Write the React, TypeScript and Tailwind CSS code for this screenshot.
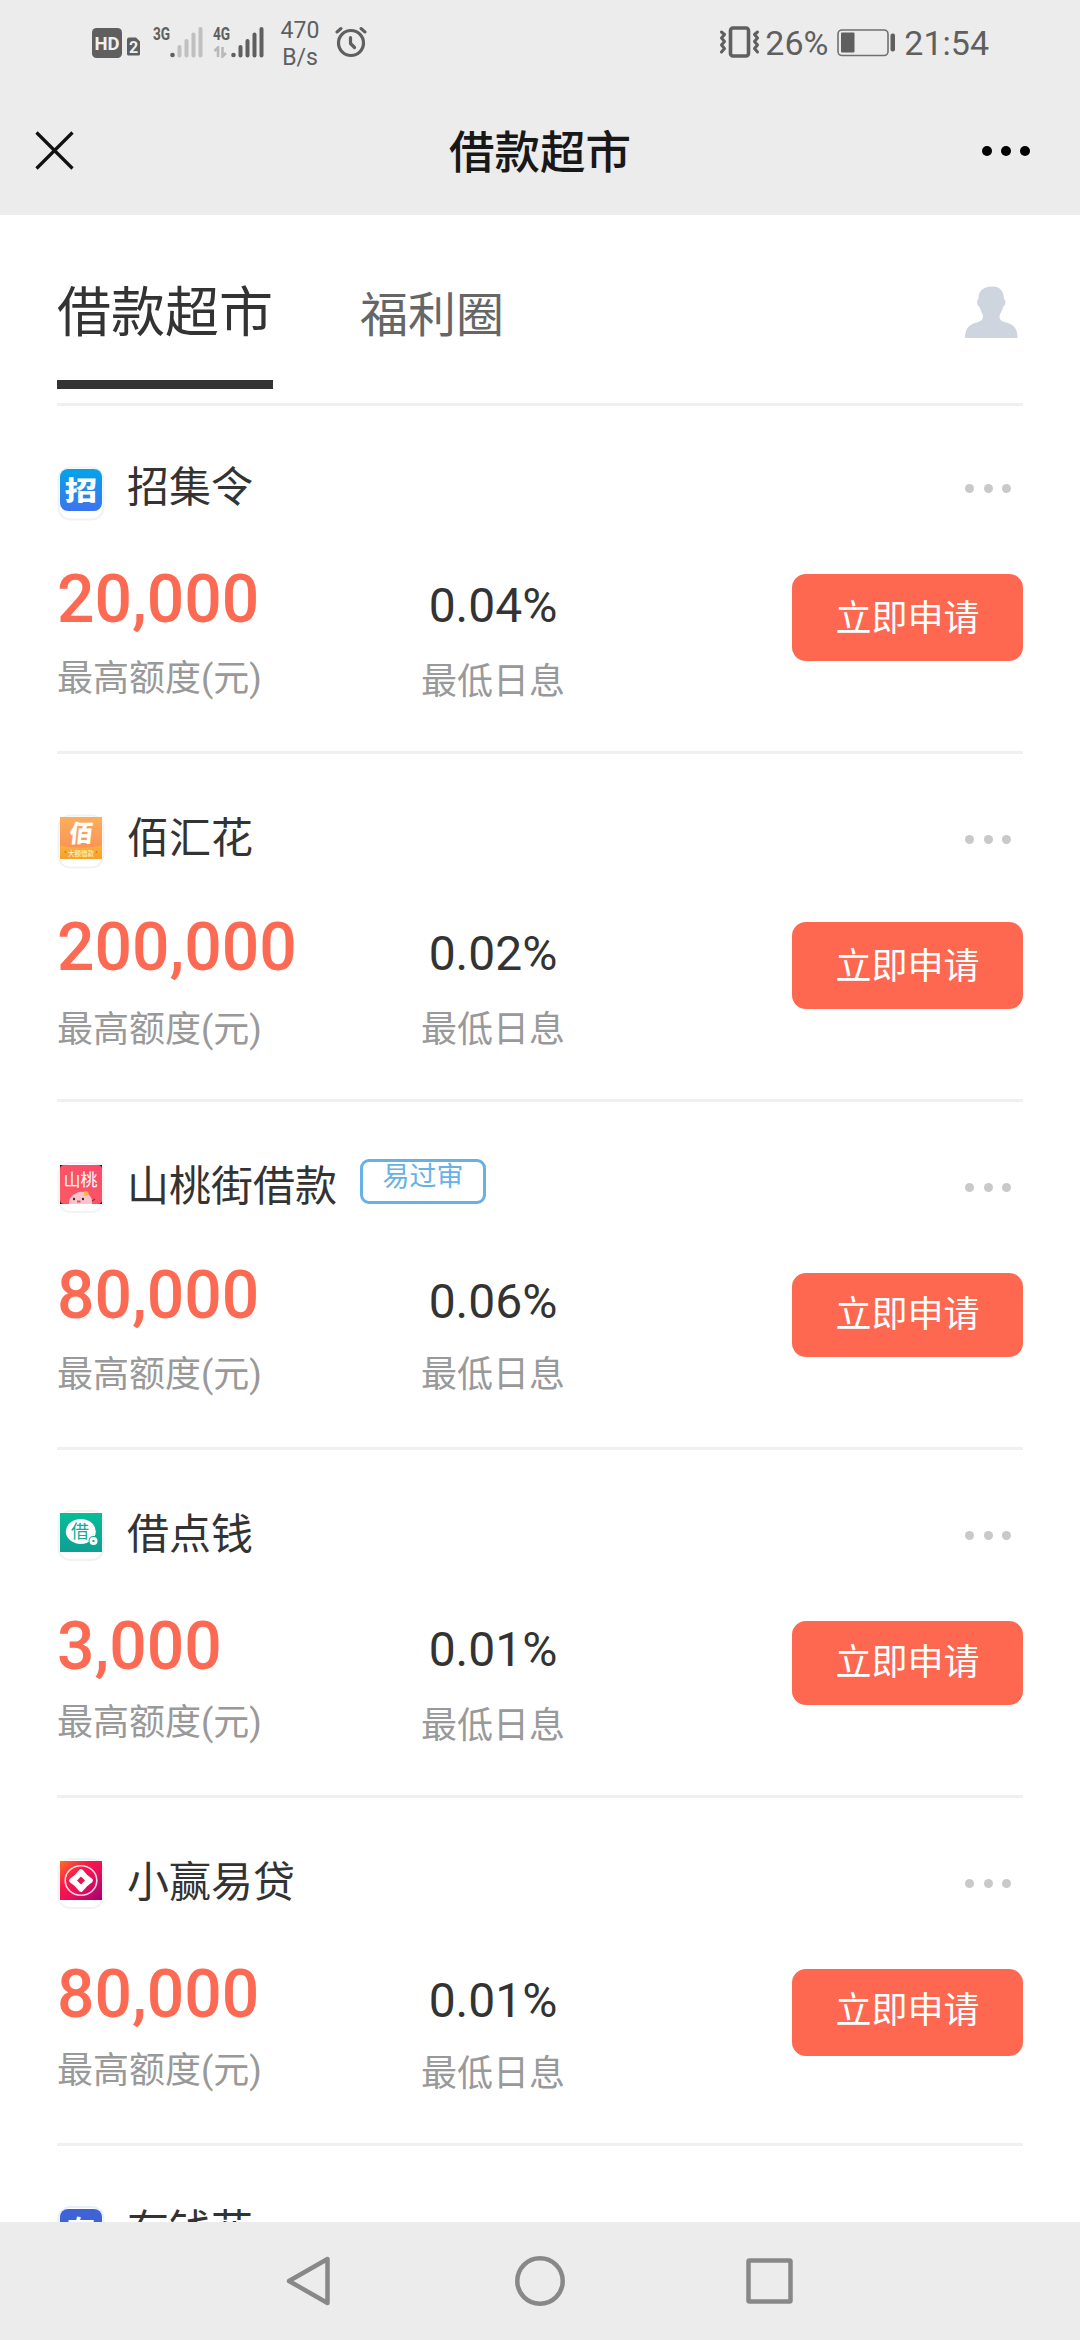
import clsx from "clsx";
import type { ReactNode } from "react";

type Loan = {
  name: string;
  logo: ReactNode;
  amount?: string;
  rate?: string;
  tag?: string;
  nameTop?: string;
  dotsTop?: string;
  amountTop?: string;
  rateTop?: string;
  limitTop?: string;
  interestTop?: string;
  button?: string;
};

const logoText = "'Noto Sans CJK SC', sans-serif";

function ZhaoLogo() {
  return (
    <svg width="48" height="56" viewBox="0 0 48 56" className="block">
      <defs>
        <linearGradient id="zhao" x1="0" y1="0" x2="0" y2="1">
          <stop offset="0" stopColor="#05a3ea" />
          <stop offset="1" stopColor="#3c74ee" />
        </linearGradient>
      </defs>
      <rect x="1.5" y="1.5" width="45" height="52" rx="12" fill="#fff" stroke="#f0f3f5" strokeWidth="2" />
      <rect x="3" y="3" width="42" height="42" rx="8" fill="url(#zhao)" />
      <text fontSize="31" fontWeight="900" textAnchor="middle" fill="#fff" fontFamily={logoText} transform="translate(23.8 34) scale(1.04 0.86)">招</text>
    </svg>
  );
}

function BaiLogo() {
  return (
    <svg width="48" height="56" viewBox="0 0 48 56" className="block">
      <defs>
        <linearGradient id="bai" x1="0" y1="0" x2="0" y2="1">
          <stop offset="0" stopColor="#fcae5c" />
          <stop offset="1" stopColor="#f98a55" />
        </linearGradient>
        <linearGradient id="baiFoot" x1="0" y1="0" x2="0" y2="1">
          <stop offset="0" stopColor="#fbb040" />
          <stop offset="1" stopColor="#f7a029" />
        </linearGradient>
      </defs>
      <rect x="1.5" y="1.5" width="45" height="52" rx="12" fill="#fff" stroke="#f0f3f5" strokeWidth="2" />
      <rect x="3" y="3" width="42" height="42" fill="url(#bai)" />
      <path d="M3 31.5Q24 36 45 31.5V45H3z" fill="url(#baiFoot)" />
      <text x="26.5" y="27.5" fontSize="24" fontWeight="900" textAnchor="middle" fill="#fff" fontFamily={logoText} transform="skewX(-6)">佰</text>
      <text x="24" y="41.5" fontSize="6.5" fontWeight="500" textAnchor="middle" fill="#fff3c4" fontFamily={logoText}>大额借款</text>
      <circle cx="8.500" cy="38" r="1" fill="#e2761d" />
      <circle cx="39.500" cy="38" r="1" fill="#e2761d" />
    </svg>
  );
}

function ShanLogo() {
  return (
    <svg width="48" height="56" viewBox="0 0 48 56" className="block">
      <defs>
        <linearGradient id="shan" x1="1" y1="0" x2="0" y2="1">
          <stop offset="0" stopColor="#fb4a6b" />
          <stop offset="1" stopColor="#fb5a62" />
        </linearGradient>
      </defs>
      <rect x="1.5" y="1" width="45" height="49" rx="12" fill="#fff" stroke="#f1f3f8" strokeWidth="2" />
      <rect x="3" y="3" width="42" height="39" fill="#111" />
      <rect x="3" y="3" width="42" height="39" rx="4" fill="url(#shan)" />
      <text x="23.5" y="24" fontSize="17" textAnchor="middle" fill="#fff" fontFamily={logoText}>山桃</text>
      <path d="M12 42c0-6 3-9 6-10 2-1.500 5-3 7-2 4-1 9 4 10 8v4z" fill="#fcc3cc" />
      <circle cx="29" cy="31.5" r="2.5" fill="#fbb64a" />
      <circle cx="17" cy="37" r="1.200" fill="#333" />
      <circle cx="26" cy="37" r="1.200" fill="#333" />
      <path d="M20 39.5h3.5" stroke="#e84a60" strokeWidth="2" />
      <path d="M35 39l3-2" stroke="#a02845" strokeWidth="1.5" />
    </svg>
  );
}

function JieLogo() {
  return (
    <svg width="48" height="56" viewBox="0 0 48 56" className="block">
      <defs>
        <linearGradient id="jie" x1="0" y1="0" x2="0" y2="1">
          <stop offset="0" stopColor="#07bd97" />
          <stop offset="1" stopColor="#0f9f94" />
        </linearGradient>
      </defs>
      <rect x="1.5" y="1" width="45" height="49" rx="12" fill="#fff" stroke="#f0f3f5" strokeWidth="2" />
      <rect x="3" y="3" width="42" height="39" fill="url(#jie)" />
      <ellipse cx="23.800" cy="21.5" rx="15" ry="12.5" fill="#fff" />
      <text x="23" y="28" fontSize="18" textAnchor="middle" fill="#10ad95" fontFamily={logoText}>借</text>
      <circle cx="36.5" cy="31" r="5" fill="#10a794" />
      <circle cx="36.5" cy="31" r="4" fill="#fff" />
      <rect x="35.5" y="30" width="2" height="2" fill="#10a794" />
    </svg>
  );
}

function XiaoLogo() {
  return (
    <svg width="48" height="56" viewBox="0 0 48 56" className="block">
      <defs>
        <linearGradient id="xiao" x1="0" y1="0" x2="1" y2="1">
          <stop offset="0" stopColor="#fb6f26" />
          <stop offset="0.35" stopColor="#f81a48" />
          <stop offset="0.6" stopColor="#e80f58" />
          <stop offset="1" stopColor="#a00075" />
        </linearGradient>
      </defs>
      <rect x="1.5" y="1" width="45" height="49" rx="12" fill="#fff" stroke="#f0f3f5" strokeWidth="2" />
      <rect x="3" y="3" width="42" height="39" fill="url(#xiao)" />
      <ellipse cx="24" cy="22.5" rx="15.8" ry="14.8" fill="none" stroke="#fff" strokeOpacity="0.85" strokeWidth="1.6" />
      <path d="M24 13Q28 18.500 34 22.5Q28 26.500 24 32Q20 26.500 14 22.5Q20 18.500 24 13z" fill="#fff" stroke="#fff" strokeWidth="4" strokeLinejoin="round" />
      <path d="M24 18.5l4 4-4 4-4-4z" fill="#e3174e" />
    </svg>
  );
}

function YouLogo() {
  return (
    <svg width="48" height="56" viewBox="0 0 48 56" className="block">
      <rect x="1.5" y="1" width="45" height="52" rx="12" fill="#fff" stroke="#e9effa" strokeWidth="2" />
      <rect x="3" y="3" width="42" height="42" rx="8" fill="#3d63d6" />
      <text x="24" y="35" fontSize="28" fontWeight="700" textAnchor="middle" fill="#fff" fontFamily={logoText}>有</text>
    </svg>
  );
}

// The *Top values are the padding above each piece of a card
const loans: Loan[] = [
  { name: "招集令", logo: <ZhaoLogo />, amount: "20,000", rate: "0.04%", nameTop: "pt-[52px]", dotsTop: "pt-[78px]" },
  { name: "佰汇花", logo: <BaiLogo />, amount: "200,000", rate: "0.02%", limitTop: "pt-[249px]" },
  { name: "山桃街借款", logo: <ShanLogo />, amount: "80,000", rate: "0.06%", tag: "易过审", interestTop: "pt-[246px]", button: "mt-[171px] h-[84px] pb-[1px]" },
  { name: "借点钱", logo: <JieLogo />, amount: "3,000", rate: "0.01%", amountTop: "pt-[166px]", button: "mt-[171px] h-[84px] pb-[1px]" },
  { name: "小赢易贷", logo: <XiaoLogo />, amount: "80,000", rate: "0.01%", amountTop: "pt-[166px]", rateTop: "pt-[178px]", button: "mt-[171px] h-[87px] pb-[4px]" },
  { name: "有钱花", logo: <YouLogo /> },
];

function LoanCard({ loan }: { loan: Loan }) {
  // every layer shares one grid cell, so each keeps its own vertical rhythm
  const cell = "col-start-1 row-start-1";
  return (
    <li className="grid h-[348px] shrink-0 grid-cols-1 grid-rows-1 overflow-hidden border-b-[3px] border-[#f0f0f0]">
      <div className={clsx(cell, "flex items-start pt-[60px]")}>{loan.logo}</div>
      <div className={clsx(cell, "flex items-start pl-[70px]", loan.nameTop ?? "pt-[55px]")}>
        <h2 className="text-[42px] leading-[60px] text-[#333]">{loan.name}</h2>
        {loan.tag && (
          <span className="mt-[2px] ml-[23px] flex h-[45px] w-[126px] justify-center rounded-[9px] border-[3px] border-[#67b1e6] text-[27px] leading-[31px] text-[#67b1e6]">
            {loan.tag}
          </span>
        )}
      </div>
      {loan.amount && (
        <>
          <div className={clsx(cell, "flex items-start justify-end gap-[9.5px] pr-[12px]", loan.dotsTop ?? "pt-[81px]")}>
            <i className="size-[9px] rounded-full bg-[#c9c9c9]" />
            <i className="size-[9px] rounded-full bg-[#c9c9c9]" />
            <i className="size-[9px] rounded-full bg-[#c9c9c9]" />
          </div>
          <div className={clsx(cell, "w-[300px] text-[66px] leading-[61px] font-medium text-[#fc6a53]", loan.amountTop ?? "pt-[163px]")}>{loan.amount}</div>
          <div className={clsx(cell, "ml-[286px] w-[300px] text-center text-[48px] leading-[49px] text-[#333]", loan.rateTop ?? "pt-[175px]")}>{loan.rate}</div>
          <div className={clsx(cell, "text-[36px] leading-[54px] text-[#999]", loan.limitTop ?? "pt-[246px]")}>最高额度(元)</div>
          <div className={clsx(cell, "ml-[286px] w-[300px] text-center text-[36px] leading-[54px] text-[#999]", loan.interestTop ?? "pt-[249px]")}>最低日息</div>
          <button className={clsx(cell, "flex w-[231px] items-center justify-center justify-self-end rounded-[14px] bg-[#ff6850] text-[36px] text-white", loan.button ?? "mt-[168px] h-[87px] pt-[2px]")}>
            立即申请
          </button>
        </>
      )}
    </li>
  );
}

function Signal({ dim }: { dim?: boolean }) {
  const c = dim ? "#c0c0c0" : "#5f5f5f";
  return (
    <svg width="34" height="32" viewBox="0 0 34 32">
      <circle cx="2.5" cy="28" r="2.3" fill="#5f5f5f" />
      <rect x="7.5" y="18" width="4" height="12.5" rx="2" fill={c} />
      <rect x="14.5" y="12" width="4" height="18.5" rx="2" fill={c} />
      <rect x="21.5" y="5.5" width="4" height="25" rx="2" fill={c} />
      <rect x="28.5" y="0" width="4" height="30.5" rx="2" fill={c} />
    </svg>
  );
}

function StatusBar() {
  return (
    <div className="flex h-[87px] items-start justify-between pr-[91px] pl-[92px] text-[#5f5f5f]">
      <div className="flex items-start">
        <svg width="50" height="32" viewBox="0 0 50 32" className="mt-[28px]">
          <rect width="30" height="30" rx="4.5" fill="#5f5f5f" />
          <text x="15" y="21.5" fontSize="18.5" fontWeight="700" textAnchor="middle" fill="#f0f0f0" fontFamily="Roboto, sans-serif">HD</text>
          <path d="M37 9.5h7l4 4V26a1.500 1.500 0 0 1-1.500 1.500h-9.500A1.500 1.500 0 0 1 35 26V11.500a2 2 0 0 1 2-2z" fill="#5f5f5f" />
          <text x="41.5" y="24.5" fontSize="16" fontWeight="700" textAnchor="middle" fill="#f0f0f0" fontFamily="Roboto, sans-serif">2</text>
        </svg>
        <span className="mt-[24px] ml-[11px] w-[17px] origin-left scale-x-[0.76] text-[18px] leading-[20px] font-bold">3G</span>
        <span className="mt-[27px]">
          <Signal dim />
        </span>
        <span className="mt-[24px] ml-[9px] flex w-[18px] flex-col">
          <span className="origin-left scale-x-[0.76] text-[18px] leading-[20px] font-bold">4G</span>
          <svg width="15" height="12" viewBox="0 0 15 12" className="mt-[2px]">
            <path d="M5 11V1.500L1.500 5M9.500 1v9.500L13 7" fill="none" stroke="#b9b9b9" strokeWidth="2.6" />
          </svg>
        </span>
        <span className="mt-[27px]">
          <Signal />
        </span>
        <span className="mt-[17px] ml-[14px] w-[42px] text-center text-[23px] leading-[27px]">470 B/s</span>
        <svg width="32" height="32" viewBox="0 0 32 32" fill="none" stroke="#5f5f5f" strokeLinecap="round" strokeLinejoin="round" className="mt-[26px] ml-[14px]">
          <circle cx="16" cy="17" r="12.5" strokeWidth="3.2" />
          <path d="M15.500 11.500v6l4 4" strokeWidth="3.2" />
          <path d="M2 6l4-3.500M30 6l-4-3.500" strokeWidth="3" />
        </svg>
      </div>
      <div className="flex items-start">
        <svg width="40" height="34" viewBox="0 0 40 34" fill="none" stroke="#5f5f5f" className="mt-[25px]">
          <rect x="10.5" y="3" width="18" height="28" rx="2.5" strokeWidth="3.6" />
          <path d="M1.500 7l3 2.500-3 3.500 3 3.500-3 3.500 3 3.500-3 3.500" strokeWidth="3" strokeLinejoin="round" strokeLinecap="round" />
          <path d="M37.500 7l-3 2.500 3 3.500-3 3.500 3 3.500-3 3.500 3 3.500" strokeWidth="3" strokeLinejoin="round" strokeLinecap="round" />
        </svg>
        <span className="mt-[23px] ml-[5px] w-[72px] text-[34px] leading-[40px]">26%</span>
        <svg width="59" height="28" viewBox="0 0 59 28" className="mt-[29px]">
          <rect x="1" y="1" width="50" height="25.5" rx="4" fill="none" stroke="#707070" strokeWidth="1.6" />
          <rect x="4" y="3.5" width="13.5" height="20" rx="1" fill="#5f5f5f" />
          <rect x="53.5" y="4.5" width="4.5" height="18" rx="2" fill="#5f5f5f" />
        </svg>
        <span className="mt-[23px] ml-[8px] text-[34px] leading-[40px]">21:54</span>
      </div>
    </div>
  );
}

function TitleBar() {
  return (
    <div className="grid h-[128px] grid-cols-[1fr_auto_1fr] items-center pr-[50px] pl-[35px]">
      <svg width="40" height="40" viewBox="0 0 40 40">
        <path d="M1.500 1.500l36 36M37.500 1.500l-36 36" stroke="#111" strokeWidth="3.2" />
      </svg>
      <h1 className="pt-[6px] pl-[15px] text-[45.5px] leading-[60px] font-medium text-[#181818]">借款超市</h1>
      <div className="flex justify-end gap-[9px]">
        <i className="size-[10px] rounded-full bg-black" />
        <i className="size-[10px] rounded-full bg-black" />
        <i className="size-[10px] rounded-full bg-black" />
      </div>
    </div>
  );
}

function Tabs() {
  return (
    <nav className="flex h-[191px] items-start border-b-[3px] border-[#f0f0f0]">
      <div className="h-[174px] w-[216px] border-b-[9px] border-[#333] pt-[60px]">
        <span className="block text-[54px] leading-[78px] text-[#333]">借款超市</span>
      </div>
      <span className="mt-[66px] ml-[87px] text-[48px] leading-[70px] text-[#666]">福利圈</span>
      <svg width="53" height="52" viewBox="0 0 53 52" fill="#ced5de" className="mt-[71px] mr-[5px] ml-auto">
        <path d="M27 .5C34 0 39 4.500 39 13c2 1 2 6-1 8-.5 4-3.500 7-3.500 9.500 0 4 3 5 8 6.500 7 2 10 6 10 15H0c0-9 3.500-13 10-15 5-1.500 8-2.500 8-6.500 0-2.500-2.500-5.500-3.500-9.500-3-2-3-7-1-8C13 5 18 1 27 .5z" />
      </svg>
    </nav>
  );
}

function NavBar() {
  return (
    <footer className="flex h-[118px] shrink-0 items-center justify-center gap-[178px] bg-[#ececec]">
      <svg width="52" height="52" viewBox="0 0 52 52" fill="none" stroke="#888" strokeWidth="4.5" strokeLinejoin="round">
        <path d="M43.500 4v44L5 26z" />
      </svg>
      <svg width="52" height="52" viewBox="0 0 52 52" fill="none" stroke="#888" strokeWidth="4.5">
        <circle cx="26" cy="26" r="22.7" />
      </svg>
      <svg width="52" height="52" viewBox="0 0 52 52" fill="none" stroke="#888" strokeWidth="4.5">
        <rect x="4.5" y="5.5" width="42" height="41" rx="1" />
      </svg>
    </footer>
  );
}

export default function App() {
  return (
    <div className="flex h-[2340px] w-[1080px] flex-col overflow-hidden bg-white font-[Roboto,'Noto_Sans_CJK_SC',sans-serif]">
      <header className="h-[215px] shrink-0 bg-[#ececec]">
        <StatusBar />
        <TitleBar />
      </header>
      <main className="min-h-0 flex-1 overflow-hidden px-[57px]">
        <Tabs />
        <ul className="flex flex-col">
          {loans.map((loan) => (
            <LoanCard key={loan.name} loan={loan} />
          ))}
        </ul>
      </main>
      <NavBar />
    </div>
  );
}
